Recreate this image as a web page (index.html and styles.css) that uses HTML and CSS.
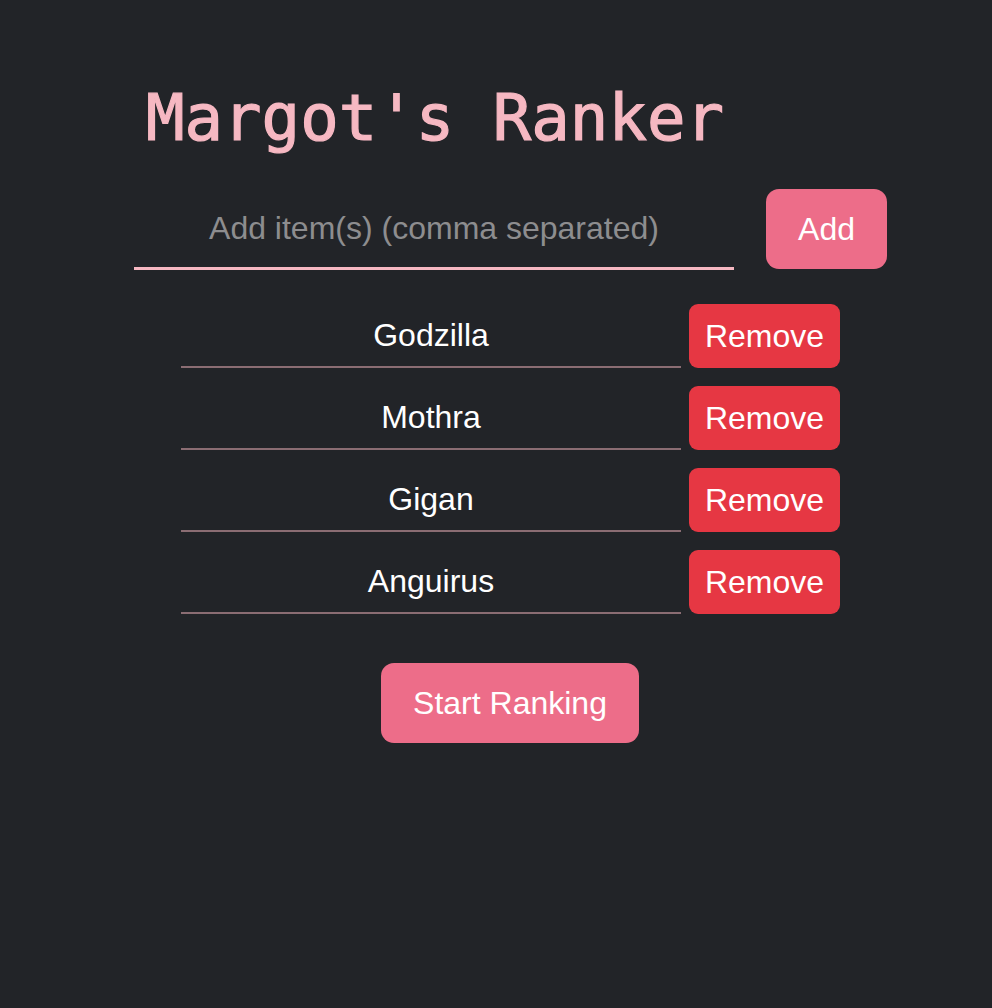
FILE: index.html
```html
<!DOCTYPE html>
<html lang="en">
<head>
<meta charset="utf-8">
<title>Margot's Ranker</title>
<link rel="stylesheet" href="styles.css">
</head>
<body>
<main class="app">
  <h1 class="title">Margot's Ranker</h1>
  <div class="add-row">
    <input class="add-input" type="text" placeholder="Add item(s) (comma separated)">
    <button class="btn btn-pink add-btn">Add</button>
  </div>
  <ul class="items">
    <li class="item"><input class="item-input" type="text" value="Godzilla"><button class="btn btn-red">Remove</button></li>
    <li class="item"><input class="item-input" type="text" value="Mothra"><button class="btn btn-red">Remove</button></li>
    <li class="item"><input class="item-input" type="text" value="Gigan"><button class="btn btn-red">Remove</button></li>
    <li class="item"><input class="item-input" type="text" value="Anguirus"><button class="btn btn-red">Remove</button></li>
  </ul>
  <div class="start-wrap">
    <button class="btn btn-pink start-btn">Start Ranking</button>
  </div>
</main>
</body>
</html>
```

FILE: styles.css
```css
html, body {
  margin: 0;
  padding: 0;
  background: #222428;
  min-height: 100%;
}
body {
  font-family: "Liberation Sans", Arial, sans-serif;
  color: #ffffff;
}
.app {
  width: 753px;
  margin-left: 134px;
  padding-top: 81px;
  display: flex;
  flex-direction: column;
}
.title {
  margin: 0 0 0 12px;
  font-family: "DejaVu Sans Mono", "Liberation Mono", monospace;
  font-weight: normal;
  font-size: 64px;
  line-height: normal;
  color: #f6b8c2;
  -webkit-text-stroke: 1.2px #f6b8c2;
}
.add-row {
  margin-top: 34px;
  display: flex;
  align-items: flex-start;
  gap: 32px;
}
.add-input {
  box-sizing: border-box;
  width: 600px;
  height: 81px;
  padding: 0;
  background: transparent;
  border: none;
  border-bottom: 3px solid #f6b8c2;
  outline: none;
  font-family: "Liberation Sans", Arial, sans-serif;
  font-size: 32px;
  color: #ffffff;
  text-align: center;
}
.add-input::placeholder {
  color: #8d8d8f;
}
.btn {
  border: none;
  color: #ffffff;
  font-family: "Liberation Sans", Arial, sans-serif;
  font-size: 32px;
  line-height: 1;
  cursor: pointer;
}
.btn-pink {
  background: #ed6d89;
  border-radius: 13px;
  height: 80px;
  padding: 0 32px;
}
.add-btn {
  width: 121px;
  padding: 0;
}
.btn-red {
  background: #e63743;
  border-radius: 9px;
  height: 64px;
  width: 151px;
  padding: 0;
}
.items {
  list-style: none;
  margin: 34px 0 0 0;
  padding: 0;
  display: flex;
  flex-direction: column;
  gap: 18px;
}
.item {
  display: flex;
  justify-content: center;
  align-items: flex-start;
  gap: 8px;
}
.item-input {
  box-sizing: border-box;
  width: 500px;
  height: 64px;
  padding: 0;
  background: transparent;
  border: none;
  border-bottom: 2px solid #8b6d73;
  outline: none;
  font-family: "Liberation Sans", Arial, sans-serif;
  font-size: 32px;
  color: #ffffff;
  text-align: center;
}
.start-wrap {
  margin-top: 49px;
  display: flex;
  justify-content: center;
}
.start-btn {
  width: 258px;
  margin-right: 1px;
  padding: 0;
}
```
